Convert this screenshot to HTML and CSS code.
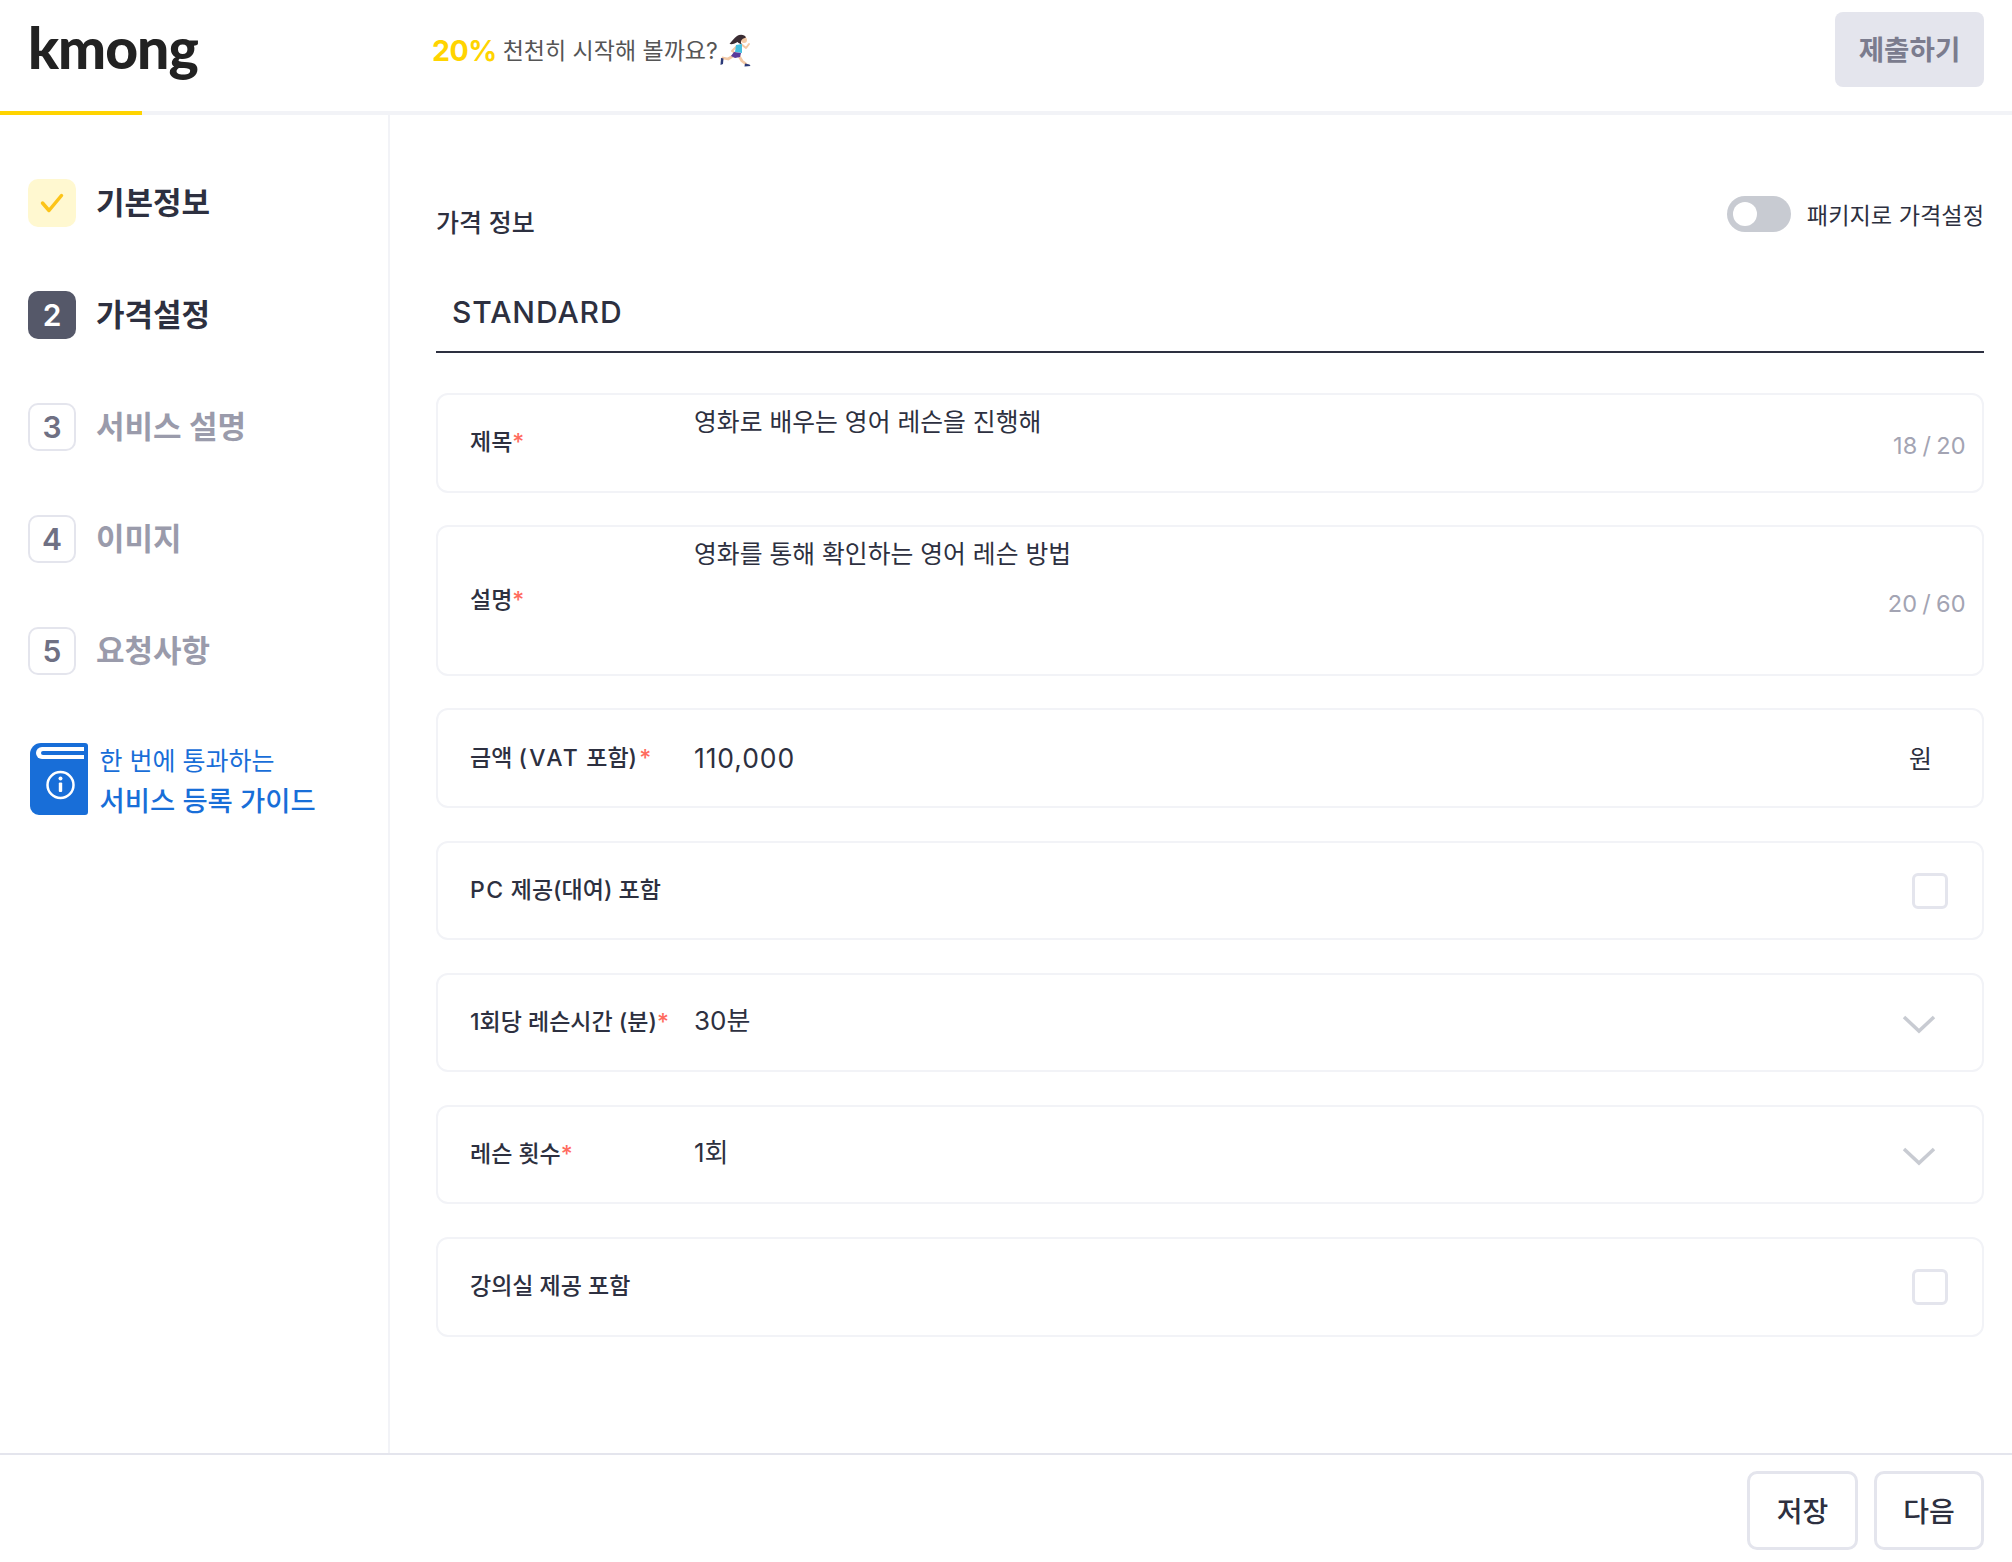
FILE: index.html
```html
<!DOCTYPE html>
<html lang="ko">
<head>
<meta charset="utf-8">
<title>kmong</title>
<link rel="stylesheet" href="styles.css">
</head>
<body>
<div class="app">
  <header class="topbar">
    <div class="logo">kmong</div>
    <div class="progress-text">
      <span class="percent">20%</span>
      <span class="cheer">천천히 시작해 볼까요?</span>
      <svg class="runner" width="32" height="36" viewBox="0 0 32 36">
        <path d="M22 11l5 4 3-4" fill="none" stroke="#f3c9a5" stroke-width="2" stroke-linecap="round" stroke-linejoin="round"/>
        <path d="M18 13l-5 5 3 2" fill="none" stroke="#f3c9a5" stroke-width="2" stroke-linecap="round" stroke-linejoin="round"/>
        <path d="M14 23l-5 3-5-1" fill="none" stroke="#f3c9a5" stroke-width="2.800" stroke-linecap="round" stroke-linejoin="round"/>
        <path d="M20 23l3 5 4 3" fill="none" stroke="#f3c9a5" stroke-width="2.800" stroke-linecap="round" stroke-linejoin="round"/>
        <path d="M17 12l6-1 0 9-7-1z" fill="#45bfe0"/>
        <path d="M15 19l7 1-1 4-5 1-4-2z" fill="#5a3a9a"/>
        <path d="M2 25l2.500 0.500-0.500 5.500-2.500 1z" fill="#2c3a78"/>
        <path d="M26 30.500l4.500 1 1 1.500-6 0.500z" fill="#2c3a78"/>
        <circle cx="25" cy="7" r="3" fill="#f3c9a5"/>
        <path d="M27 4.500c-1-3-6-3.500-9-1.500-3 2-5 5-7.500 8 3 0.500 6-0.500 8-2 1.500 1.500 3 2 4 2-1-2-1-5 4.500-6.500z" fill="#3a2c33"/>
      </svg>
    </div>
    <button class="submit-btn">제출하기</button>
  </header>
  <div class="progress-track"><div class="progress-fill"></div></div>

  <div class="middle">
    <aside class="sidebar">
      <nav class="steps">
        <div class="step">
          <span class="step-box box-done">
            <svg width="24" height="20" viewBox="0 0 24 20"><path d="M2.500 10l6.500 7.500L21.500 2.500" fill="none" stroke="#fcc419" stroke-width="3.500" stroke-linecap="round" stroke-linejoin="round"/></svg>
          </span>
          <span class="step-label">기본정보</span>
        </div>
        <div class="step">
          <span class="step-box box-active">2</span>
          <span class="step-label">가격설정</span>
        </div>
        <div class="step">
          <span class="step-box box-todo">3</span>
          <span class="step-label label-todo">서비스 설명</span>
        </div>
        <div class="step">
          <span class="step-box box-todo">4</span>
          <span class="step-label label-todo">이미지</span>
        </div>
        <div class="step">
          <span class="step-box box-todo">5</span>
          <span class="step-label label-todo">요청사항</span>
        </div>
      </nav>
      <div class="guide">
        <svg class="guide-icon" width="58" height="72" viewBox="0 0 58 72">
          <path d="M11 0h44a3 3 0 0 1 3 3v66a3 3 0 0 1-3 3H9a9 9 0 0 1-9-9V11A11 11 0 0 1 11 0z" fill="#186ed8"/>
          <path d="M54 4H12a6 6 0 0 0 0 12h42z" fill="#ffffff"/>
          <path d="M54 8H13a2 2 0 0 0 0 4h41z" fill="#186ed8"/>
          <circle cx="30.500" cy="42" r="13" fill="none" stroke="#ffffff" stroke-width="2.500"/>
          <circle cx="30.500" cy="35.500" r="2" fill="#ffffff"/>
          <rect x="28.800" y="39.500" width="3.400" height="9.500" rx="1" fill="#ffffff"/>
        </svg>
        <div class="guide-text">
          <div class="guide-small">한 번에 통과하는</div>
          <div class="guide-big">서비스 등록 가이드</div>
        </div>
      </div>
    </aside>

    <main class="content">
      <div class="section-head">
        <h2 class="section-title">가격 정보</h2>
        <div class="toggle-wrap">
          <span class="toggle"><span class="knob"></span></span>
          <span class="toggle-label">패키지로 가격설정</span>
        </div>
      </div>
      <div class="tab">STANDARD</div>

      <div class="fields">
        <div class="field">
          <div class="f-label">제목<span class="req">*</span></div>
          <div class="f-value value-top">영화로 배우는 영어 레슨을 진행해</div>
          <div class="counter">18 / 20</div>
        </div>
        <div class="field field-tall">
          <div class="f-label">설명<span class="req">*</span></div>
          <div class="f-value value-top">영화를 통해 확인하는 영어 레슨 방법</div>
          <div class="counter">20 / 60</div>
        </div>
        <div class="field">
          <div class="f-label">금액 <span class="wide">(VAT</span> 포함<span class="wide">)</span><span class="req">*</span></div>
          <div class="f-value amount">110,000</div>
          <div class="unit">원</div>
        </div>
        <div class="field">
          <div class="f-label nowrap"><span class="wide-pc">PC</span> 제공(대여) 포함</div>
          <div class="f-value"></div>
          <span class="check"></span>
        </div>
        <div class="field">
          <div class="f-label nowrap">1회당 레슨시간 (분)<span class="req">*</span></div>
          <div class="f-value num">30분</div>
          <svg class="chevron" width="34" height="20" viewBox="0 0 34 20"><path d="M2 3l15 14L32 3" fill="none" stroke="#c8cbd2" stroke-width="3.500"/></svg>
        </div>
        <div class="field">
          <div class="f-label">레슨 횟수<span class="req">*</span></div>
          <div class="f-value num">1회</div>
          <svg class="chevron" width="34" height="20" viewBox="0 0 34 20"><path d="M2 3l15 14L32 3" fill="none" stroke="#c8cbd2" stroke-width="3.500"/></svg>
        </div>
        <div class="field">
          <div class="f-label">강의실 제공 포함</div>
          <div class="f-value"></div>
          <span class="check"></span>
        </div>
      </div>
    </main>
  </div>

  <footer class="bottombar">
    <button class="foot-btn btn-save">저장</button>
    <button class="foot-btn btn-next">다음</button>
  </footer>
</div>
</body>
</html>
```
FILE: styles.css
```css
* { box-sizing: border-box; }
html, body { margin: 0; padding: 0; background: #fff; }
body {
  font-family: "Inter", "Noto Sans CJK KR", sans-serif;
  color: #2d3040;
}
.app {
  width: 2012px;
  height: 1562px;
  display: flex;
  flex-direction: column;
}

/* top bar */
.topbar {
  height: 111px;
  flex: none;
  display: flex;
  align-items: center;
  padding: 0 28px;
}
.logo {
  width: 404px;
  font-family: "Lato", sans-serif;
  font-weight: 900;
  font-size: 57px;
  line-height: 60px;
  color: #222;
  letter-spacing: -1px;
  padding-bottom: 18px;
}
.progress-text {
  display: flex;
  align-items: center;
  flex: 1;
  padding-bottom: 10px;
}
.percent {
  color: #ffd400;
  font-weight: 700;
  font-size: 28.500px;
  line-height: 40px;
  letter-spacing: -0.5px;
}
.cheer {
  margin-left: 6px;
  font-size: 23px;
  color: #555;
  line-height: 40px;
}
.runner { margin-left: 1px; flex: none; }
.submit-btn {
  width: 149px;
  height: 75px;
  border: 0;
  border-radius: 8px;
  background: #e4e5ed;
  color: #7b7c8e;
  font-family: inherit;
  font-size: 27.600px;
  font-weight: 700;
  padding: 0 0 4px;
  margin-top: -12px;
  margin-bottom: 0;
}
.progress-track { height: 4px; flex: none; background: #f2f3f7; }
.progress-fill { width: 142px; height: 100%; background: #ffd400; }

/* layout */
.middle { flex: 1; display: flex; min-height: 0; }
.sidebar {
  width: 390px;
  flex: none;
  border-right: 2px solid #f2f3f7;
  padding: 64px 28px 0;
}
.steps { display: flex; flex-direction: column; gap: 64px; }
.step { display: flex; align-items: center; height: 48px; gap: 20px; }
.step-box {
  width: 48px;
  height: 48px;
  border-radius: 10px;
  display: flex;
  align-items: center;
  justify-content: center;
  font-size: 30px;
  font-weight: 600;
  flex: none;
}
.box-done { background: #fff8d0; }
.box-active { background: #555869; color: #fff; }
.box-todo { border: 2px solid #e4e5ed; color: #6f7083; }
.step-label { font-size: 31px; font-weight: 700; color: #2d3040; line-height: 40px; }
.label-todo { color: #9a9bab; }

.guide { display: flex; align-items: center; margin-top: 60px; padding-left: 2px; gap: 11.500px; }
.guide-icon { flex: none; }
.guide-text { color: #186ed8; padding-top: 7px; }
.guide-small { font-size: 25px; line-height: 38px; }
.guide-big { font-size: 27.400px; font-weight: 500; line-height: 42px; }

.content { flex: 1; padding: 0 28px 0 46px; }
.section-head {
  height: 136px;
  display: flex;
  justify-content: space-between;
  align-items: flex-end;
}
.section-title { margin: 0 0 10px; font-size: 25px; font-weight: 500; line-height: 36px; }
.toggle-wrap { display: flex; align-items: center; gap: 16px; padding-bottom: 19px; height: 36px; box-sizing: content-box; }
.toggle {
  width: 64px;
  height: 36px;
  border-radius: 18px;
  background: #c8cbd2;
  display: flex;
  align-items: center;
  padding-left: 6px;
}
.knob { width: 24px; height: 24px; border-radius: 50%; background: #fff; }
.toggle-label { font-size: 23.200px; color: #2d3040; }
.tab {
  height: 102px;
  padding: 41px 16px 0;
  border-bottom: 2px solid #2d3040;
  font-size: 30px;
  font-weight: 500;
  line-height: 40px;
  letter-spacing: 0.9px;
}
.fields { display: flex; flex-direction: column; gap: 32.700px; padding-top: 40px; }
.field {
  height: 99.500px;
  border: 2px solid #f2f3f7;
  border-radius: 12px;
  display: flex;
  align-items: center;
  padding: 0 34px 0 32px;
}
.field-tall { height: 150.500px; }
.f-label { width: 224px; flex: none; font-size: 23px; font-weight: 500; line-height: 32px; padding-bottom: 1px; }
.nowrap { white-space: nowrap; }
.wide { letter-spacing: 2.300px; }
.wide-pc { letter-spacing: 1.500px; }
.req { color: #ff6b5e; }
.f-value { flex: 1; font-size: 24.800px; line-height: 36px; }
.value-top { align-self: flex-start; margin-top: 9px; }
.num { font-size: 26px; padding-bottom: 4px; }
.amount { font-size: 26.500px; letter-spacing: 0.9px; }
.counter { font-size: 23.500px; color: #a3a4b3; margin-right: -18px; padding-top: 6px; word-spacing: -2px; letter-spacing: 0.3px; }
.unit { font-size: 25px; margin-right: 16px; padding-bottom: 2px; }
.check { width: 36px; height: 36px; border: 3px solid #e4e5ed; border-radius: 6px; flex: none; margin-top: 1px; }
.chevron { flex: none; margin-right: 12px; margin-top: 2px; }

/* footer */
.bottombar {
  height: 109px;
  flex: none;
  border-top: 2px solid #e4e5ed;
  display: flex;
  justify-content: flex-end;
  gap: 16px;
  padding: 16px 28px 0;
}
.foot-btn {
  height: 79px;
  border: 3px solid #e4e5ed;
  border-radius: 10px;
  background: #fff;
  color: #2d3040;
  font-family: inherit;
  font-size: 28px;
  font-weight: 500;
  padding: 0 0 2px;
}
.btn-save { width: 111px; }
.btn-next { width: 110px; }
```
